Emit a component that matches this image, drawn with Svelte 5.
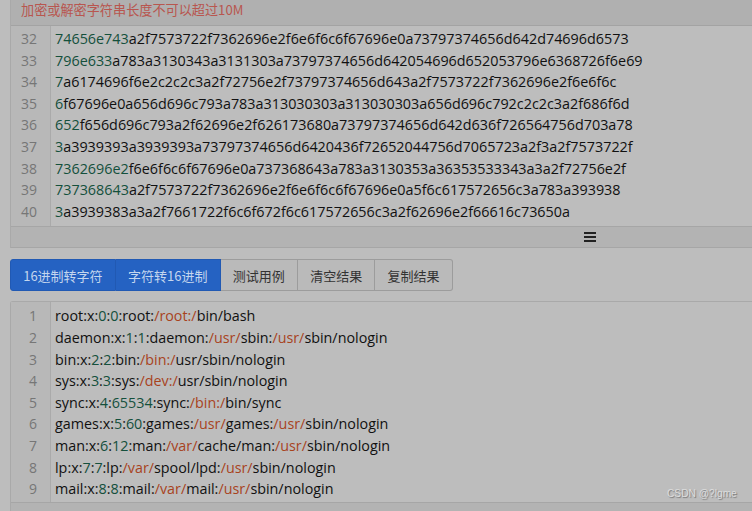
<script>
    const hexLines = [
        ["74656e743", "a2f7573722f7362696e2f6e6f6c6f67696e0a73797374656d642d74696d6573"],
        ["796e633", "a783a3130343a3131303a73797374656d642054696d652053796e6368726f6e69"],
        ["7", "a6174696f6e2c2c2c3a2f72756e2f73797374656d643a2f7573722f7362696e2f6e6f6c"],
        ["6", "f67696e0a656d696c793a783a313030303a313030303a656d696c792c2c2c3a2f686f6d"],
        ["652", "f656d696c793a2f62696e2f626173680a73797374656d642d636f726564756d703a78"],
        ["3", "a3939393a3939393a73797374656d6420436f72652044756d7065723a2f3a2f7573722f"],
        ["7362696e2", "f6e6f6c6f67696e0a737368643a783a3130353a36353533343a3a2f72756e2f"],
        ["737368643", "a2f7573722f7362696e2f6e6f6c6f67696e0a5f6c617572656c3a783a393938"],
        ["3", "a3939383a3a2f7661722f6c6f672f6c617572656c3a2f62696e2f66616c73650a"],
    ];

    // n = number, s = path, plain strings otherwise
    const passwd = [
        ["root:x:", { n: "0" }, ":", { n: "0" }, ":root:", { s: "/root:/" }, "bin/bash"],
        ["daemon:x:", { n: "1" }, ":", { n: "1" }, ":daemon:", { s: "/usr/" }, "sbin:", { s: "/usr/" }, "sbin/nologin"],
        ["bin:x:", { n: "2" }, ":", { n: "2" }, ":bin:", { s: "/bin:/" }, "usr/sbin/nologin"],
        ["sys:x:", { n: "3" }, ":", { n: "3" }, ":sys:", { s: "/dev:/" }, "usr/sbin/nologin"],
        ["sync:x:", { n: "4" }, ":", { n: "65534" }, ":sync:", { s: "/bin:/" }, "bin/sync"],
        ["games:x:", { n: "5" }, ":", { n: "60" }, ":games:", { s: "/usr/" }, "games:", { s: "/usr/" }, "sbin/nologin"],
        ["man:x:", { n: "6" }, ":", { n: "12" }, ":man:", { s: "/var/" }, "cache/man:", { s: "/usr/" }, "sbin/nologin"],
        ["lp:x:", { n: "7" }, ":", { n: "7" }, ":lp:", { s: "/var/" }, "spool/lpd:", { s: "/usr/" }, "sbin/nologin"],
        ["mail:x:", { n: "8" }, ":", { n: "8" }, ":mail:", { s: "/var/" }, "mail:", { s: "/usr/" }, "sbin/nologin"],
    ];

    const buttons = [
        { label: "16进制转字符", primary: true },
        { label: "字符转16进制", primary: true },
        { label: "测试用例" },
        { label: "清空结果" },
        { label: "复制结果" },
    ];
</script>

<div class="page">
    <div class="panel top">
        <div class="notice">加密或解密字符串长度不可以超过10M</div>
        <div class="editor">
            <div class="gutter">
                {#each hexLines as _, i}
                    <div class="num">{i + 32}</div>
                {/each}
            </div>
            <div class="code hex">
                {#each hexLines as line}
                    <div class="line"><span class="n">{line[0]}</span>{line[1]}</div>
                {/each}
            </div>
        </div>
        <div class="handle">
            <span class="bars"><i></i><i></i><i></i></span>
        </div>
    </div>

    <div class="btn-group">
        {#each buttons as b}
            <button class:primary={b.primary}>{b.label}</button>
        {/each}
    </div>

    <div class="panel bottom">
        <div class="editor">
            <div class="gutter">
                {#each passwd as _, i}
                    <div class="num">{i + 1}</div>
                {/each}
            </div>
            <div class="code">
                {#each passwd as line}
                    <div class="line">
                        {#each line as part}
                            {#if typeof part === "string"}{part}{:else if part.n}<span class="n">{part.n}</span>{:else}<span class="s">{part.s}</span>{/if}
                        {/each}
                    </div>
                {/each}
            </div>
        </div>
        <div class="handle"></div>
    </div>

    <div class="watermark">CSDN @?lgme</div>
</div>

<style>
    :global(body) {
        background: #bdbdbd;
        overflow: hidden;
    }
    .page {
        position: relative;
        height: 511px;
        overflow: hidden;
        font-family: "Open Sans", "Noto Sans CJK SC", sans-serif;
        font-size: 14px;
        color: #111111;
    }
    .panel {
        width: 1158px;
        margin-left: 10px;
        border-left: 1px solid #a9a9a9;
        box-sizing: border-box;
    }
    .top {
        height: 248px;
    }
    .bottom {
        margin-top: 10px;
        border-top: 1px solid #a9a9a9;
        border-radius: 3px 0 0 0;
    }
    .notice {
        height: 25px;
        padding-left: 10px;
        line-height: 20px;
        font-family: "Noto Sans CJK SC", sans-serif;
        font-size: 13.15px;
        color: #b8564f;
        background: #b0b0b0;
        border-bottom: 1px solid #a3a3a3;
    }
    .editor {
        display: flex;
        height: 200px;
        overflow: hidden;
    }
    .gutter {
        width: 39px;
        flex: none;
        padding-top: 2px;
        background: #b8b8b8;
        border-right: 1px solid #aaaaaa;
    }
    .bottom .gutter,
    .bottom .code {
        padding-top: 3.4px;
    }
    .num {
        height: 21.6px;
        line-height: 21.6px;
        padding-right: 13px;
        text-align: right;
        color: #767676;
    }
    .code {
        padding: 2px 0 0 4px;
        font-size: 14.33px;
        white-space: nowrap;
    }
    .code.hex {
        font-size: 14.36px;
    }
    .line {
        height: 21.6px;
        line-height: 21.6px;
    }
    .n {
        color: #14503c;
    }
    .s {
        color: #a8431d;
    }
    .handle {
        height: 21px;
        display: flex;
        align-items: center;
        justify-content: center;
        background: #b3b3b3;
        border-top: 1px solid #a6a6a6;
        border-bottom: 1px solid #a6a6a6;
    }
    .top .handle {
        box-sizing: border-box;
        height: 22px;
    }
    .bars {
        display: flex;
        flex-direction: column;
        gap: 2px;
    }
    .bars i {
        display: block;
        width: 12px;
        height: 2px;
        background: #222222;
    }
    .btn-group {
        display: flex;
        margin: 11px 0 0 10px;
    }
    button {
        height: 32px;
        padding: 0 12.2px;
        font-family: "Noto Sans CJK SC", sans-serif;
        font-size: 13px;
        color: #333333;
        background: #bababa;
        border: 1px solid #9c9c9c;
        border-left-width: 0;
    }
    button:first-child {
        border-left-width: 1px;
        border-radius: 3px 0 0 3px;
    }
    button:last-child {
        border-radius: 0 3px 3px 0;
    }
    button.primary {
        color: #c4d6ee;
        background: #2562c2;
        border-color: #2159b3;
    }
    .watermark {
        position: absolute;
        left: 667px;
        top: 488px;
        font-family: "Liberation Sans", sans-serif;
        font-size: 10.2px;
        color: #dddddd;
        text-shadow: 1px 1px 1px #777777;
    }
</style>
